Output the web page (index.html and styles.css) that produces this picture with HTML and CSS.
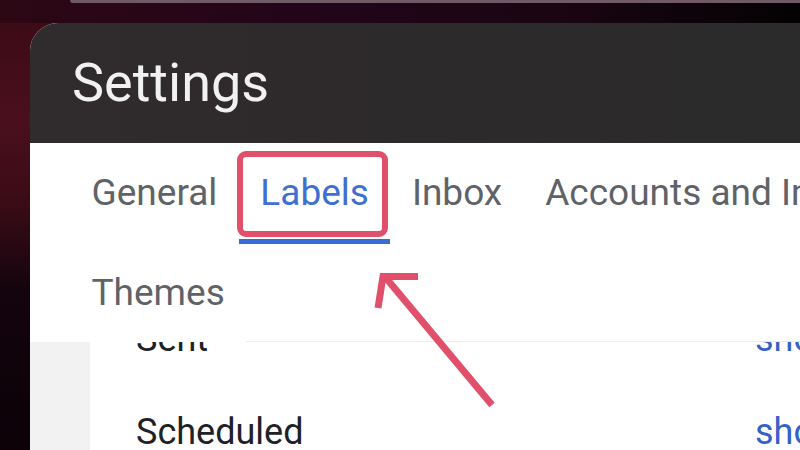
FILE: index.html
```html
<!DOCTYPE html>
<html>
    <head>
        <title>Settings</title>
        <meta charset="utf-8">
        <link rel="stylesheet" href="styles.css">
    </head>
    <body>
        <div class="topbar"></div>
        <div class="window">
            <header class="head">
                <h1>Settings</h1>
            </header>
            <section class="panel">
                <nav class="tabs">
                    <div class="tabrow">
                        <a class="tab">General</a>
                        <a class="tab active">Labels<span class="mark"></span></a>
                        <a class="tab">Inbox</a>
                        <a class="tab">Accounts and Import</a>
                    </div>
                    <div class="tabrow second">
                        <a class="tab themes">Themes</a>
                        <div class="filler"></div>
                    </div>
                </nav>
                <div class="content">
                    <div class="side"></div>
                    <div class="list">
                        <div class="rows">
                            <div class="row"><span class="name">Sent</span><span class="link">show</span></div>
                            <div class="row"><span class="name">Scheduled</span><span class="link">show</span></div>
                        </div>
                    </div>
                </div>
            </section>
        </div>
        <svg class="arrow" width="800" height="450" viewBox="0 0 800 450">
            <line x1="492" y1="405" x2="386" y2="278" stroke="#e0506a" stroke-width="7"/>
            <polyline points="418,276.5 383,276.5 378,308" fill="none" stroke="#e0506a" stroke-width="7"/>
        </svg>
    </body>
</html>
```

FILE: styles.css
```css
html, body{
    margin: 0;
    height: 450px;
    overflow: hidden;
}
body{
    position: relative;
    font-family: Roboto, "Open Sans", sans-serif;
    background: linear-gradient(to bottom, #3a0a15 0, #4a0f1c 120px, #3b0c17 200px, #14040d 290px, #0c0208 100%);
}
.topbar{
    position: relative;
    height: 23px;
    background: linear-gradient(to right, #2c0714 0, #22051a 40%, #1a0512 70%, #040203 100%);
}
.topbar::before{
    content: "";
    position: absolute;
    left: 70px;
    right: 0;
    top: 0;
    height: 3px;
    border-bottom-left-radius: 30px;
    background: #6f5a66;
}
.window{
    margin-left: 30px;
    border-top-left-radius: 28px;
    overflow: hidden;
    background: #fff;
}
.head{
    height: 120px;
    background: linear-gradient(to right, #302c2d 0, #2e2a2b 40%, #2b2b2b 100%);
}
h1{
    margin: 0;
    padding-left: 42px;
    font-weight: 400;
    font-size: 54px;
    line-height: 120px;
    color: #f1f1f1;
}
.panel{
    background: #fff;
}
.tabs{
    padding-left: 40px;
    background: #fff;
}
.tabrow{
    display: flex;
    white-space: nowrap;
}
.tab{
    position: relative;
    padding: 3px 21.5px 0;
    font-size: 37px;
    line-height: 93px;
    color: #5f6368;
    border-bottom: 5px solid transparent;
}
.tab.active{
    color: #3f6fd1;
    border-bottom-color: #3b6cd6;
}
.mark{
    position: absolute;
    left: -2px;
    top: 8px;
    width: 139px;
    height: 74px;
    border: 6px solid #e0506a;
    border-radius: 9px;
}
.second .tab{
    padding-top: 0;
    line-height: 97px;
    border-bottom: 1px solid #fff;
}
.filler{
    flex: 1;
    border-bottom: 1px solid #ececec;
}
.content{
    display: flex;
    height: 108px;
}
.side{
    width: 60px;
    background: #f2f2f2;
}
.list{
    flex: 1;
    overflow: hidden;
}
.rows{
    margin-top: -49px;
}
.row{
    display: grid;
    grid-template-columns: 619px 1fr;
    padding-left: 46px;
    font-size: 36px;
    line-height: 93px;
    white-space: nowrap;
}
.name{
    color: #202124;
}
.link{
    color: #3461c5;
}
.arrow{
    position: absolute;
    left: 0;
    top: 0;
}
```
